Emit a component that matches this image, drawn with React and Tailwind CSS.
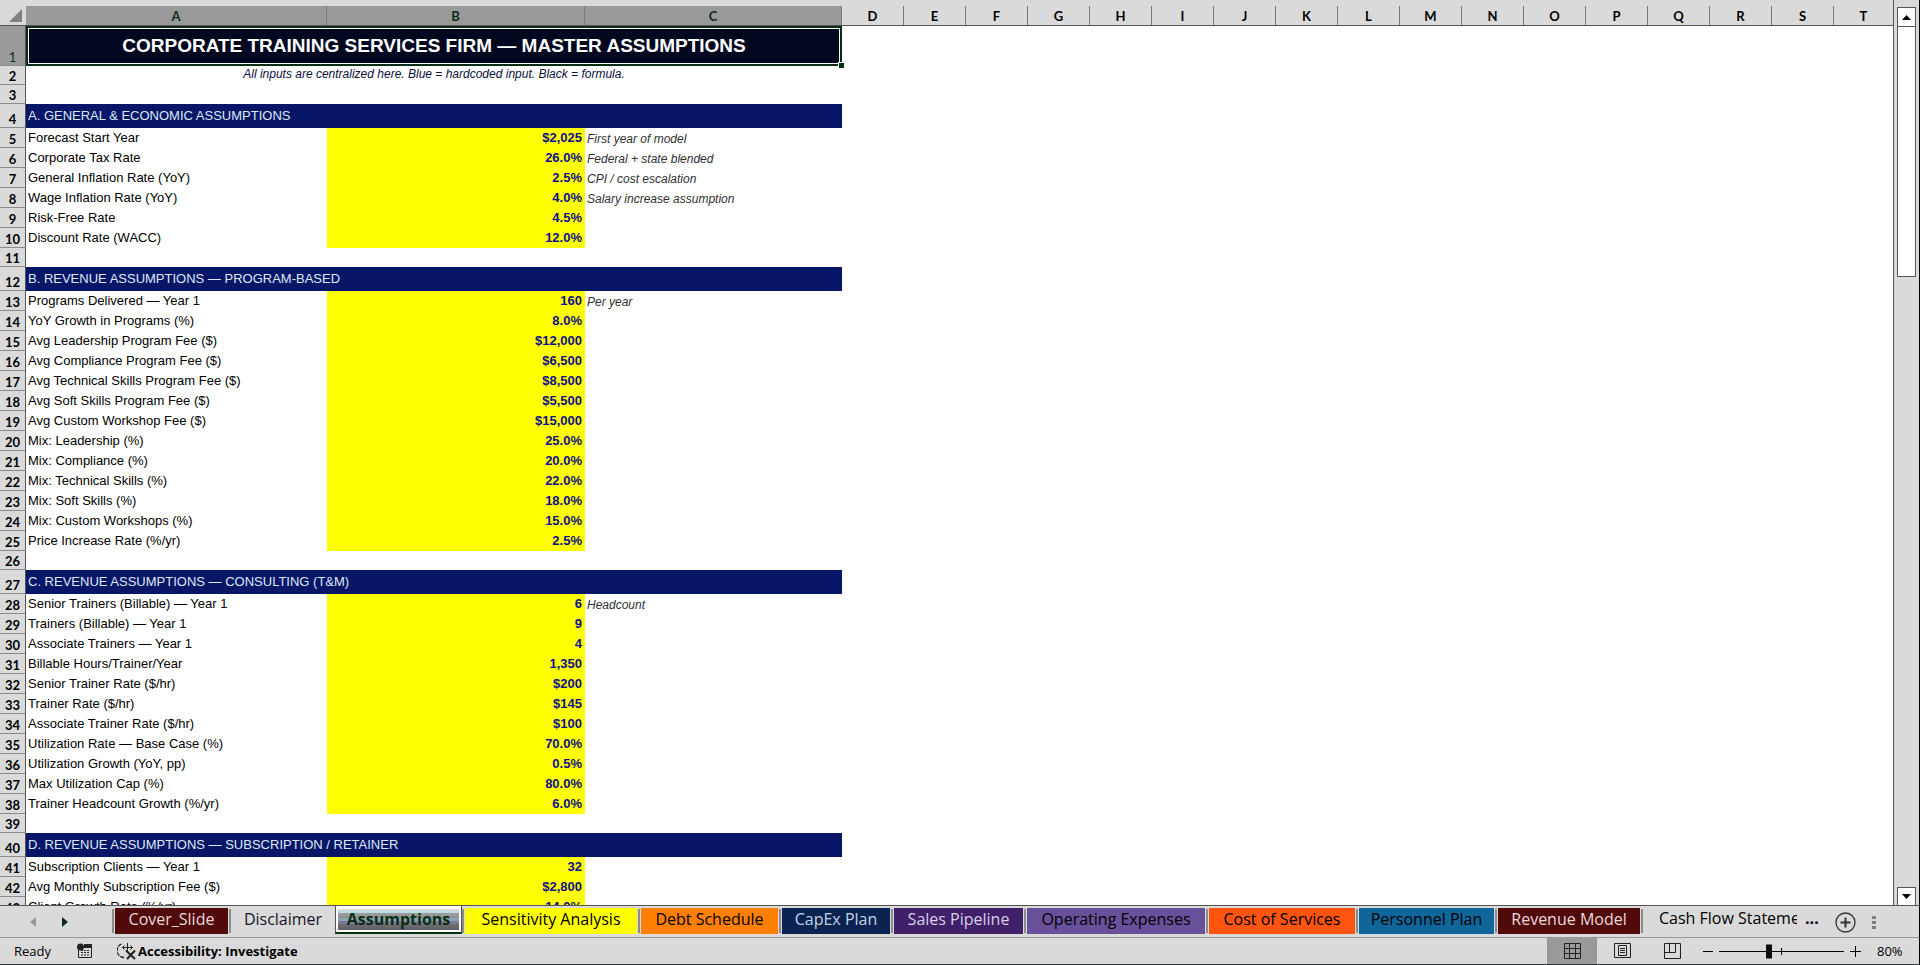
import React from 'react';
import { clsx } from 'clsx';

const LETTERS = 'DEFGHIJKLMNOPQRST'.split('');

const ROWS = [
  { type: 'title', text: 'CORPORATE TRAINING SERVICES FIRM — MASTER ASSUMPTIONS' },
  { type: 'note', text: 'All inputs are centralized here. Blue = hardcoded input. Black = formula.' },
  { type: 'blank' },
  { type: 'section', text: 'A. GENERAL & ECONOMIC ASSUMPTIONS' },
  { label: 'Forecast Start Year', value: '$2,025', hint: 'First year of model' },
  { label: 'Corporate Tax Rate', value: '26.0%', hint: 'Federal + state blended' },
  { label: 'General Inflation Rate (YoY)', value: '2.5%', hint: 'CPI / cost escalation' },
  { label: 'Wage Inflation Rate (YoY)', value: '4.0%', hint: 'Salary increase assumption' },
  { label: 'Risk-Free Rate', value: '4.5%' },
  { label: 'Discount Rate (WACC)', value: '12.0%' },
  { type: 'blank' },
  { type: 'section', text: 'B. REVENUE ASSUMPTIONS — PROGRAM-BASED' },
  { label: 'Programs Delivered — Year 1', value: '160', hint: 'Per year' },
  { label: 'YoY Growth in Programs (%)', value: '8.0%' },
  { label: 'Avg Leadership Program Fee ($)', value: '$12,000' },
  { label: 'Avg Compliance Program Fee ($)', value: '$6,500' },
  { label: 'Avg Technical Skills Program Fee ($)', value: '$8,500' },
  { label: 'Avg Soft Skills Program Fee ($)', value: '$5,500' },
  { label: 'Avg Custom Workshop Fee ($)', value: '$15,000' },
  { label: 'Mix: Leadership (%)', value: '25.0%' },
  { label: 'Mix: Compliance (%)', value: '20.0%' },
  { label: 'Mix: Technical Skills (%)', value: '22.0%' },
  { label: 'Mix: Soft Skills (%)', value: '18.0%' },
  { label: 'Mix: Custom Workshops (%)', value: '15.0%' },
  { label: 'Price Increase Rate (%/yr)', value: '2.5%' },
  { type: 'blank' },
  { type: 'section', text: 'C. REVENUE ASSUMPTIONS — CONSULTING (T&M)' },
  { label: 'Senior Trainers (Billable) — Year 1', value: '6', hint: 'Headcount' },
  { label: 'Trainers (Billable) — Year 1', value: '9' },
  { label: 'Associate Trainers — Year 1', value: '4' },
  { label: 'Billable Hours/Trainer/Year', value: '1,350' },
  { label: 'Senior Trainer Rate ($/hr)', value: '$200' },
  { label: 'Trainer Rate ($/hr)', value: '$145' },
  { label: 'Associate Trainer Rate ($/hr)', value: '$100' },
  { label: 'Utilization Rate — Base Case (%)', value: '70.0%' },
  { label: 'Utilization Growth (YoY, pp)', value: '0.5%' },
  { label: 'Max Utilization Cap (%)', value: '80.0%' },
  { label: 'Trainer Headcount Growth (%/yr)', value: '6.0%' },
  { type: 'blank' },
  { type: 'section', text: 'D. REVENUE ASSUMPTIONS — SUBSCRIPTION / RETAINER' },
  { label: 'Subscription Clients — Year 1', value: '32' },
  { label: 'Avg Monthly Subscription Fee ($)', value: '$2,800' },
  { label: 'Client Growth Rate (%/yr)', value: '14.0%' },
];

const TABS = [
  { name: 'Cover_Slide', width: 'w-[113px]', color: 'bg-[#500a0a] text-[#ead9d9]' },
  { name: 'Disclaimer', width: 'w-[102px]', color: 'text-[#15152a]' },
  { name: 'Assumptions', active: true },
  { name: 'Sensitivity Analysis', width: 'w-[172px]', color: 'bg-[#ffff00] text-black' },
  { name: 'Debt Schedule', width: 'w-[137px]', color: 'bg-[#ff8000] text-black' },
  { name: 'CapEx Plan', width: 'w-[108px]', color: 'bg-[#0a2350] text-[#c3d3e6]' },
  { name: 'Sales Pipeline', width: 'w-[129px]', color: 'bg-[#402068] text-[#d9cfe6]' },
  { name: 'Operating Expenses', width: 'w-[178px]', color: 'bg-[#68509a] text-black' },
  { name: 'Cost of Services', width: 'w-[146px]', color: 'bg-[#ff5510] text-black' },
  { name: 'Personnel Plan', width: 'w-[135px]', color: 'bg-[#10659a] text-black' },
  { name: 'Revenue Model', width: 'w-[142px]', color: 'bg-[#500a0a] text-[#ead9d9]' },
];

const HEIGHTS = { title: 'h-10', note: 'h-[19px]', blank: 'h-[19px]', section: 'h-6' };

const Cells = ({ row }) => {
  if (row.type === 'title') {
    return (
      <td colSpan={3} className="relative bg-[#020720] border-2 border-[#0a2e14] p-0 text-center text-white text-[19px] leading-6 font-bold outline-1 -outline-offset-3 outline-white">
        {row.text}
        <span className="absolute -right-1 -bottom-1 size-[6px] bg-[#0a2e14] border-t border-l border-white" />
      </td>
    );
  }
  if (row.type === 'note') {
    return <td colSpan={3} className="p-0 text-center align-top italic text-[12px] leading-4 text-[#0a0f3c]">{row.text}</td>;
  }
  if (row.type === 'section') {
    return <td colSpan={3} className="bg-[#081668] p-0 pl-0.5 text-[13px] leading-4 text-[#dce9f5]">{row.text}</td>;
  }
  if (row.type === 'blank') {
    return <td colSpan={3} className="p-0" />;
  }
  return (
    <>
      <td className="p-0 pl-0.5 text-[13px] leading-4 text-black">{row.label}</td>
      <td className="bg-[#ffff00] p-0 pr-[3px] text-right font-bold text-[13px] leading-4 text-[#10108a]">{row.value}</td>
      <td className="p-0 pl-0.5 pt-0.5 italic text-[12px] leading-4 text-[#303030]">{row.hint}</td>
    </>
  );
};

const Sheet = () => (
  <div className="flex-1 min-w-0 overflow-hidden border-r border-[#555] bg-white">
    <table className="w-full table-fixed border-separate border-spacing-0 whitespace-nowrap font-['Liberation_Sans',Arial,sans-serif]">
      <colgroup>
        <col className="w-[26px]" />
        <col className="w-[301px]" />
        <col className="w-[258px]" />
        <col className="w-[257px]" />
        {LETTERS.map((l, i) => <col key={l} className={i < LETTERS.length - 1 ? 'w-[62px]' : ''} />)}
      </colgroup>
      <thead className="font-['Lato',Carlito,sans-serif] text-[13px]">
        <tr className="h-[26px]">
          <th className="bg-[#dadada] border-b border-[#555] p-0 pt-1.5 pr-1">
            <svg className="ml-auto" width="13" height="13" viewBox="0 0 13 13"><path d="M13 0v13H0z" fill="#808080" /></svg>
          </th>
          {['A', 'B', 'C'].map((l) => (
            <th key={l} scope="col" className="bg-[linear-gradient(#dadada_6px,#9a9a9a_6px)] border-b border-[#555] p-0 pt-1.5 text-[#0a2e14]">
              <div className="border-r border-[#7c7c7c] h-[19px] leading-5">{l}</div>
            </th>
          ))}
          {LETTERS.map((l, i) => (
            <th key={l} scope="col" className="bg-[#dadada] border-b border-[#555] p-0 pt-1.5 text-black">
              <div className={clsx('h-[19px] leading-5', i < LETTERS.length - 1 && 'border-r border-[#7c7c7c]')}>{l}</div>
            </th>
          ))}
        </tr>
      </thead>
      <tbody>
        {ROWS.map((row, i) => (
          <tr key={i} className={HEIGHTS[row.type] || 'h-5'}>
            <th
              scope="row"
              className={clsx(
                "border-b border-r border-b-[#8c8c8c] border-r-[#555] p-0 align-bottom font-['Lato',Carlito,sans-serif] text-[13px] leading-4",
                i === 0 ? 'bg-[#9a9a9a] text-[#0a2e14] font-normal' : 'bg-[#dadada] text-black'
              )}
            >
              {i + 1}
            </th>
            <Cells row={row} />
            <td colSpan={LETTERS.length} className="p-0" />
          </tr>
        ))}
      </tbody>
    </table>
  </div>
);

const ScrollBar = () => (
  <div className="flex w-[25px] shrink-0 flex-col items-center pt-[7px]">
    <button aria-label="Scroll up" className="flex h-5 w-[19px] items-center justify-center border border-[#555] bg-white">
      <svg width="9" height="5" viewBox="0 0 9 5"><path d="M4.500 0L9 5H0z" fill="#000" /></svg>
    </button>
    <div className="h-[250px] w-[19px] border border-t-0 border-[#555] bg-white" />
    <button aria-label="Scroll down" className="mt-auto flex h-[18px] w-[19px] items-center justify-center border border-b-0 border-[#555] bg-white">
      <svg width="9" height="5" viewBox="0 0 9 5"><path d="M0 0h9L4.500 5z" fill="#000" /></svg>
    </button>
  </div>
);

const TabBar = () => (
  <nav className="flex h-8 items-start border-b border-[#999] text-[16px]">
    <div className="flex h-8 w-28 shrink-0 items-center gap-[26px] pl-[30px]">
      <button aria-label="Previous sheet"><svg width="6" height="10" viewBox="0 0 6 10"><path d="M6 0v10L0 5z" fill="#999" /></svg></button>
      <button aria-label="Next sheet"><svg width="6" height="10" viewBox="0 0 6 10"><path d="M0 0v10l6-5z" fill="#0a2e14" /></svg></button>
    </div>
    {TABS.map((tab) =>
      tab.active ? (
        <button key={tab.name} className="flex h-7 w-[127px] shrink-0 items-end border-x border-b-2 border-x-[#555] border-b-[#0a2e14] bg-white px-0.5 pb-0.5">
          <span className="h-[21px] w-full bg-[linear-gradient(#dadada_0px,#dadada_2px,#b8dce4_2px,#b8dce4_4px,#a0a0a0_4px,#8c8c8c_9px,#88a4b0_9px,#88a4b0_12px,#80789a_12px,#80789a_15px,#707070_15px,#60606a_20px)] text-center font-bold leading-5 text-[#0a2e14]">{tab.name}</span>
        </button>
      ) : (
        <div key={tab.name} className="flex h-7 shrink-0 items-center pt-0.5">
          <span className="h-6 w-0.5 bg-[#8c8c8c] mr-px" />
          <button className={clsx('h-[26px] pb-1 text-center leading-5', tab.width, tab.color)}>{tab.name}</button>
          <span className="w-px" />
        </div>
      )
    )}
    <span className="mt-[3px] h-6 w-0.5 shrink-0 bg-[#8c8c8c]" />
    <button className="ml-4 w-[138px] shrink-0 overflow-hidden whitespace-nowrap text-left leading-6">Cash Flow Stateme</button>
    <button aria-label="More sheets" className="ml-2 font-bold leading-6">...</button>
    <button aria-label="New sheet" className="ml-4 mt-1.5">
      <svg width="21" height="21" viewBox="0 0 21 21" fill="none" stroke="#333">
        <circle cx="10.500" cy="10.500" r="9.500" strokeWidth="1.300" />
        <path d="M10.500 5.500v10M5.500 10.500h10" strokeWidth="2" />
      </svg>
    </button>
    <svg className="ml-4 mt-2.5" width="4" height="14" viewBox="0 0 4 14" fill="#808080"><path d="M0 0h4v3H0zM0 5h4v3H0zM0 10h4v3H0z" /></svg>
  </nav>
);

const StatusBar = () => (
  <footer className="flex h-[27px] items-center border-b border-[#2a3a40] text-[13px] leading-5">
    <span className="ml-3.5">Ready</span>
    <button aria-label="Record macro" className="ml-[26px]">
      <svg width="16" height="16" viewBox="0 0 16 16">
        <path d="M1.500 7v7.500h13V1.500H8" fill="none" stroke="#222" />
        <path d="M7 1h8v4H7z" fill="#222" />
        <circle cx="3.500" cy="4" r="3.500" fill="#222" />
        <path d="M4 7.500h9M4 9.500h9M4 12h9" stroke="#222" strokeDasharray="2 1" />
      </svg>
    </button>
    <button className="ml-6 flex items-center gap-0.5 font-bold">
      <svg width="19" height="18" viewBox="0 0 19 18" fill="none" stroke="#222">
        <path d="M4.500 2A7 7 0 0 0 7 15.500" strokeWidth="1.300" strokeDasharray="4 1" />
        <path d="M5.500 5.500h10M7.500 3.500l-2 2 2 2M13.500 3.500l2 2-2 2M10.500 1v8" />
        <path d="M9 8.500l9 8.500M18 8.500l-8 8.500" strokeWidth="2" />
      </svg>
      Accessibility: Investigate
    </button>
    <div className="ml-auto flex h-full items-center">
      <button aria-label="Normal view" className="flex h-full w-[50px] items-center justify-center bg-[#9a9a9a]">
        <svg width="17" height="16" viewBox="0 0 17 16" fill="none" stroke="#222"><path d="M.5.5h16v15H.5zM.5 5.500h16M.5 10.500h16M5.500.5v15M11.500.5v15" /></svg>
      </button>
      <button aria-label="Page layout view" className="flex h-full w-[50px] items-center justify-center">
        <svg width="17" height="16" viewBox="0 0 17 16" fill="none" stroke="#222"><path d="M.5.5h16v14H.5zM4.500 2.500h8v10h-8zM6 5.500h5M6 7.500h5M6 9.500h5" /></svg>
      </button>
      <button aria-label="Page break preview" className="flex h-full w-[50px] items-center justify-center">
        <svg width="17" height="16" viewBox="0 0 17 16" fill="none" stroke="#222"><path d="M.5.5h16v15H.5zM.5 9.500h11V.5M5.500.5v9" /></svg>
      </button>
      <button aria-label="Zoom out" className="ml-1.5"><svg width="10" height="11" viewBox="0 0 10 11" stroke="#000"><path d="M0 5.500h10" /></svg></button>
      <div className="relative ml-1.5 flex h-4 w-[125px] items-center">
        <input type="range" aria-label="Zoom" min="10" max="400" defaultValue="80" className="absolute inset-0 w-full opacity-0" />
        <svg width="125" height="16" viewBox="0 0 125 16" stroke="#000"><path d="M0 8.500h125M62.500 5v7" /><path d="M47 1.500h6v14h-6z" stroke="none" fill="#110c14" /></svg>
      </div>
      <button aria-label="Zoom in" className="ml-1.5"><svg width="11" height="11" viewBox="0 0 11 11" stroke="#000"><path d="M0 5.500h11M5.500 0v11" /></svg></button>
      <span className="ml-4 w-[42px]">80%</span>
    </div>
  </footer>
);

const App = () => {
  return (
    <div className="flex h-screen flex-col overflow-hidden border-r border-black bg-[#dadada] font-['Open_Sans','Noto_Sans',sans-serif] text-black">
      <div className="flex min-h-0 flex-1 border-b border-[#555]">
        <Sheet />
        <ScrollBar />
      </div>
      <TabBar />
      <StatusBar />
    </div>
  );
};

export default App;
